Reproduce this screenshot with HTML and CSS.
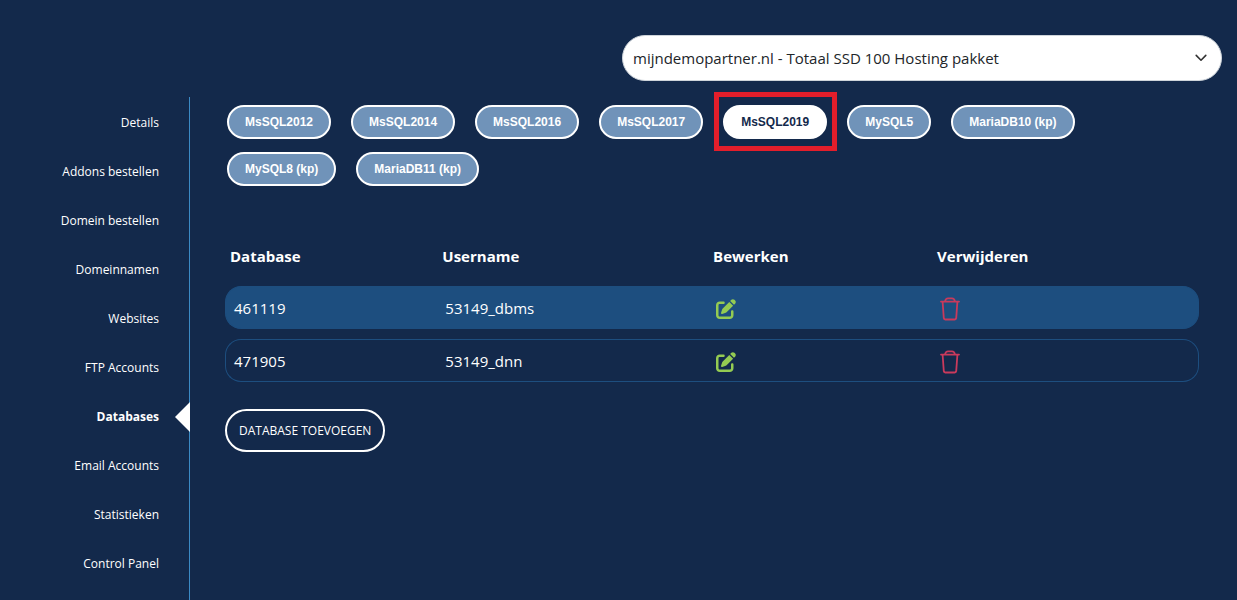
FILE: index.html
```html
<!DOCTYPE html>
<html lang="nl">
<head>
<meta charset="utf-8">
<meta name="viewport" content="width=device-width, initial-scale=1">
<title>Databases</title>
<link rel="stylesheet" href="styles.css">
</head>
<body class="page">
<svg class="sprite" aria-hidden="true">
  <symbol id="icon-edit" viewBox="0 0 512 512"><path fill="currentColor" d="M471.6 21.7c-21.9-21.9-57.3-21.9-79.2 0L362.3 51.7l97.9 97.9 30.1-30.1c21.9-21.9 21.9-57.3 0-79.2L471.6 21.7zm-299.2 220c-6.1 6.1-10.8 13.6-13.5 21.9l-29.6 88.8c-2.9 8.6-.6 18.1 5.8 24.6s15.9 8.7 24.6 5.8l88.8-29.6c8.2-2.7 15.7-7.4 21.9-13.5L437.7 172.3 339.7 74.3 172.4 241.7zM96 64C43 64 0 107 0 160V416c0 53 43 96 96 96H352c53 0 96-43 96-96V320c0-17.7-14.3-32-32-32s-32 14.3-32 32v96c0 17.7-14.3 32-32 32H96c-17.7 0-32-14.3-32-32V160c0-17.7 14.3-32 32-32h96c17.7 0 32-14.3 32-32s-14.3-32-32-32H96z"/></symbol>
  <symbol id="icon-trash" viewBox="0 0 20 24"><path fill="none" stroke="currentColor" stroke-width="1.8" stroke-linecap="round" stroke-linejoin="round" d="M1 4.6h18M5 4.4C5.4 2.4 6.4 1.3 8 1.3h4c1.6 0 2.6 1.1 3 3.1M2.6 4.8l1.2 16.4c.1.9.6 1.3 1.4 1.3h9.6c.8 0 1.3-.4 1.4-1.3l1.2-16.4"/></symbol>
</svg>
<header class="topbar">
  <div class="package">
    <select class="package-select" aria-label="Hosting pakket">
      <option>mijndemopartner.nl - Totaal SSD 100 Hosting pakket</option>
    </select>
    <svg class="package-chevron" viewBox="0 0 12 8" aria-hidden="true"><path fill="none" stroke="#333" stroke-width="1.6" stroke-linecap="round" stroke-linejoin="round" d="M1.2 1.4 6 6.2l4.8-4.8"/></svg>
  </div>
</header>
<div class="layout">
  <nav class="sidebar">
    <a class="sidebar-link" href="#">Details</a>
    <a class="sidebar-link" href="#">Addons bestellen</a>
    <a class="sidebar-link" href="#">Domein bestellen</a>
    <a class="sidebar-link" href="#">Domeinnamen</a>
    <a class="sidebar-link" href="#">Websites</a>
    <a class="sidebar-link" href="#">FTP Accounts</a>
    <a class="sidebar-link is-active" href="#" aria-current="page">Databases</a>
    <a class="sidebar-link" href="#">Email Accounts</a>
    <a class="sidebar-link" href="#">Statistieken</a>
    <a class="sidebar-link" href="#">Control Panel</a>
  </nav>
  <main class="content">
    <div class="pills">
      <button class="pill" type="button">MsSQL2012</button>
      <button class="pill" type="button">MsSQL2014</button>
      <button class="pill" type="button">MsSQL2016</button>
      <button class="pill" type="button">MsSQL2017</button>
      <button class="pill is-active" type="button">MsSQL2019</button>
      <button class="pill" type="button">MySQL5</button>
      <button class="pill" type="button">MariaDB10 (kp)</button>
      <button class="pill" type="button">MySQL8 (kp)</button>
      <button class="pill" type="button">MariaDB11 (kp)</button>
    </div>
    <table class="databases">
      <colgroup><col class="col-name"><col class="col-user"><col class="col-edit"><col class="col-delete"></colgroup>
      <thead>
        <tr><th>Database</th><th>Username</th><th>Bewerken</th><th>Verwijderen</th></tr>
      </thead>
      <tbody>
        <tr>
          <td>461119</td><td>53149_dbms</td>
          <td><button class="action edit" type="button" aria-label="Bewerken"><svg class="icon-edit"><use href="#icon-edit"/></svg></button></td>
          <td><button class="action delete" type="button" aria-label="Verwijderen"><svg class="icon-trash"><use href="#icon-trash"/></svg></button></td>
        </tr>
        <tr>
          <td>471905</td><td>53149_dnn</td>
          <td><button class="action edit" type="button" aria-label="Bewerken"><svg class="icon-edit"><use href="#icon-edit"/></svg></button></td>
          <td><button class="action delete" type="button" aria-label="Verwijderen"><svg class="icon-trash"><use href="#icon-trash"/></svg></button></td>
        </tr>
      </tbody>
    </table>
    <button class="add" type="button">DATABASE TOEVOEGEN</button>
  </main>
</div>
</body>
</html>
```
FILE: styles.css
```css
* { box-sizing: border-box; }

.page {
  margin: 0;
  min-height: 100vh;
  display: flex;
  flex-direction: column;
  background: #13294b;
  color: #fff;
  font-family: "Open Sans", "Noto Sans", sans-serif;
  font-size: 15px;
}

.sprite { display: none; }

.topbar {
  display: flex;
  justify-content: flex-end;
  padding: 35px 15px 16px;
}

.package {
  position: relative;
  flex: 0 1 600px;
}

.package-select {
  display: block;
  width: 100%;
  height: 46px;
  padding: 0 36px 0 10px;
  border: 1px solid #ced4da;
  border-radius: 23px;
  appearance: none;
  background: #fff;
  color: #212529;
  font: inherit;
}

.package-chevron {
  position: absolute;
  top: 19px;
  right: 15px;
  width: 12px;
  height: 8px;
  pointer-events: none;
}

.layout {
  flex: 1;
  display: flex;
}

.sidebar {
  flex: 0 0 190px;
  padding-top: 1px;
  border-right: 1px solid #3b8ac4;
}

.sidebar-link {
  position: relative;
  display: block;
  padding-right: 30px;
  color: #fff;
  font-size: 12px;
  line-height: 49px;
  text-align: right;
  text-decoration: none;
}

.sidebar-link.is-active { font-weight: 700; }

.sidebar-link.is-active::after {
  content: "";
  position: absolute;
  top: 10px;
  right: -1px;
  border: solid transparent;
  border-width: 15px 15px 15px 0;
  border-right-color: #fff;
}

.content {
  flex: 1;
  padding: 8px 38px 20px 35px;
}

.pills {
  display: flex;
  flex-wrap: wrap;
  gap: 13px 20px;
  padding-left: 2px;
}

.pill {
  position: relative;
  height: 34px;
  padding: 0 16px;
  border: 2px solid #fff;
  border-radius: 17px;
  background: #7093b9;
  color: #fff;
  font: 700 12px "Liberation Sans", Arial, sans-serif;
}

.pill.is-active {
  background: #fff;
  color: #13294b;
}

.pill.is-active::after {
  content: "";
  position: absolute;
  inset: -15px -12px -14px -11px;
  border: 5px solid #e31e2b;
}

.databases {
  width: 100%;
  margin-top: 40px;
  table-layout: fixed;
  border-collapse: separate;
  border-spacing: 0 10px;
}

.col-name { width: 21.8%; }
.col-user { width: 27.8%; }
.col-edit { width: 23%; }
.col-delete { width: 27.4%; }

.databases th {
  height: 40px;
  padding: 0 5px;
  text-align: left;
  font-weight: 700;
}

.databases td {
  height: 43px;
  padding: 0 8px;
  border: solid #1d4e7f;
  border-width: 1px 0;
}

.databases td:first-child {
  border-left-width: 1px;
  border-radius: 16px 0 0 16px;
}

.databases td:last-child {
  border-right-width: 1px;
  border-radius: 0 16px 16px 0;
}

.databases tbody tr:nth-child(odd) td { background: #1d4e7f; }

.action {
  display: block;
  margin-top: 2px;
  padding: 0;
  border: 0;
  background: none;
}

.action svg { display: block; }
.edit { color: #94cb52; }
.delete { color: #c93a5c; }
.icon-edit { width: 20px; height: 20px; }
.icon-trash { width: 20px; height: 24px; }

.add {
  height: 43px;
  margin-top: 17px;
  padding: 0 12px;
  border: 2px solid #fff;
  border-radius: 22px;
  background: transparent;
  color: #fff;
  font: inherit;
  font-size: 12px;
}
```
